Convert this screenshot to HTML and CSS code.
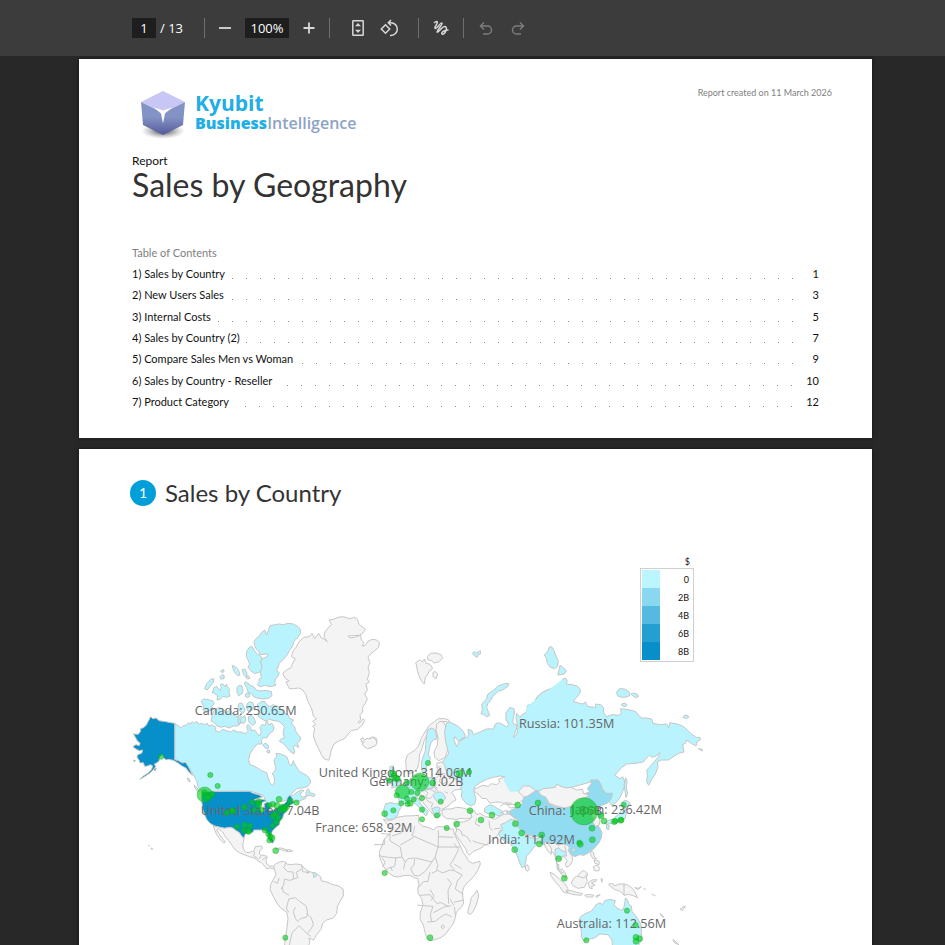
FILE: index.html
```html
<!DOCTYPE html>
<html lang="en">
<head>
    <meta charset="UTF-8">
    <meta name="viewport" content="width=device-width, initial-scale=1.0">
    <title>Sales by Geography</title>
    <link rel="stylesheet" href="styles.css">
</head>
<body>
    <header class="toolbar">
        <input class="field page-field" type="text" value="1" aria-label="Page">
        <span class="page-total">/ 13</span>
        <span class="sep"></span>
        <button class="tool" aria-label="Zoom out"><svg viewBox="0 0 20 20"><path class="thick" d="M4 10h12"/></svg></button>
        <input class="field zoom-field" type="text" value="100%" aria-label="Zoom">
        <button class="tool" aria-label="Zoom in"><svg viewBox="0 0 20 20"><path class="thick" d="M4.500 10h11M10 4.500v11"/></svg></button>
        <span class="sep"></span>
        <button class="tool fit" aria-label="Fit to page"><svg viewBox="0 0 20 20"><rect x="4.800" y="2.800" width="10.400" height="14.400" rx=".5"/><path class="solid" d="M10 5l3 3.200H7zM10 15l3-3.200H7z"/></svg></button>
        <button class="tool" aria-label="Rotate"><svg viewBox="0 0 20 20"><path d="M5.500 6.800L9.700 11l-4.200 4.200L1.300 11zM8.500 4.800H11a6.300 6.300 0 0 1 0 12.600h-1M11 2L8.300 4.800 11 7.600"/></svg></button>
        <span class="sep draw-sep"></span>
        <button class="tool" aria-label="Draw"><svg viewBox="0 0 20 20"><path d="M3 5C5 3 7 3 6.200 5C5.500 7 3 10 4.200 10.500C6 11 9.500 4 11 5C12.300 6 5 13 6.200 14.200C7.500 15.200 11 8 14 8.500C17.500 9.500 13.500 16.500 11.500 16.200C9 15.500 13 11.500 17.500 12"/></svg></button>
        <span class="sep undo-sep"></span>
        <button class="tool" aria-label="Undo" disabled><svg viewBox="0 0 20 20"><path d="M8 4.500L4.500 8 8 11.500M5 8h6.500a4 4 0 0 1 0 8H7"/></svg></button>
        <button class="tool" aria-label="Redo" disabled><svg viewBox="0 0 20 20"><path d="M12 4.500L15.500 8 12 11.500M15 8H8.500a4 4 0 0 0 0 8H13"/></svg></button>
    </header>

    <main class="viewer">
        <section class="page cover">
            <div class="cover-top">
                <div class="logo">
                    <svg class="cube" viewBox="0 0 50 54">
                        <defs>
                            <radialGradient id="shadow"><stop offset="0" stop-color="#333"/><stop offset="1" stop-color="#999" stop-opacity="0"/></radialGradient>
                            <linearGradient id="side" x2="0" y2="1"><stop offset=".45" stop-color="#8493c5"/><stop offset="1" stop-color="#55599b"/></linearGradient>
                        </defs>
                        <ellipse cx="25" cy="44" rx="22" ry="8" fill="url(#shadow)"/>
                        <path fill="#c7c6f5" d="M25 4l22 11-22 11L3 15z"/>
                        <path fill="url(#side)" d="M3 15l22 11v22L5 38zM47 15L25 26v22l20-10z"/>
                        <path fill="#fff" d="M16 20.500l9 3 9-3-7 6-2 10-2-10z"/>
                    </svg>
                    <div class="brand">
                        <div class="brand-name">Kyubit</div>
                        <div class="brand-line"><b>Business</b>Intelligence</div>
                    </div>
                </div>
                <div class="created">Report created on 11 March 2026</div>
            </div>
            <div class="kind">Report</div>
            <h1>Sales by Geography</h1>
            <h2>Table of Contents</h2>
            <ul class="toc">
                <li><span>1) Sales by Country</span><i></i><b>1</b></li>
                <li><span>2) New Users Sales</span><i></i><b>3</b></li>
                <li><span>3) Internal Costs</span><i></i><b>5</b></li>
                <li><span>4) Sales by Country (2)</span><i></i><b>7</b></li>
                <li><span>5) Compare Sales Men vs Woman</span><i></i><b>9</b></li>
                <li><span>6) Sales by Country - Reseller</span><i></i><b>10</b></li>
                <li><span>7) Product Category</span><i></i><b>12</b></li>
            </ul>
        </section>

        <section class="page report">
            <div class="section-title"><span class="number">1</span><h3>Sales by Country</h3></div>
            <div class="map-box">
                <svg class="map" viewBox="36 -180 2061 1400">
                    <!-- North America -->
                    <g>
                        <path class="low" d="M164 340L173 346 182 353 190 347 200 345 206 338 211 342 217 335 222 340 230 334 236 343 246 340 254 344 262 340 266 348 276 345 288 352 286 362 298 366 308 358 320 362 332 366 340 360 352 366 364 366 376 371 384 362 380 350 384 343 392 352 394 362 404 360 412 370 418 378 424 366 420 352 428 342 434 348 440 332 446 345 456 340 462 352 460 362 448 372 440 384 430 382 424 392 426 402 412 402 400 416 390 432 386 450 390 464 402 468 416 476 428 484 440 488 444 502 450 518 458 527 464 515 462 498 456 492 464 484 468 474 464 462 462 450 470 440 468 430 482 432 492 436 500 440 504 450 508 462 514 468 520 452 524 462 530 472 536 482 548 490 560 496 570 508 572 518 562 530 545 534 530 536 518 548 508 560 520 556 532 546 544 540 552 542 540 552 546 562 560 558 556 566 540 572 530 578 526 570 516 572 508 556 500 572 480 574 456 588 440 578 430 556 400 546 385 544 270 544 245 545 234 530 230 512 222 498 214 484 204 470 194 462 180 456 164 448z"/>
                        <path class="low" d="M557 549L564 536 570 542 566 548 578 550 586 554 582 560 570 556 560 558zM202 504l7 4 1 8-6-4zM222 526l10 8 6 12-10-7z"/>
                        <path class="low" d="M402 95L408 86 418 78 424 68 434 60 440 75 446 60 450 47 464 44 478 42 490 44 504 40 520 42 534 50 541 58 542 70 532 84 522 94 518 108 508 122 502 134 494 144 488 150 478 160 474 172 470 182 478 188 474 198 466 208 464 218 468 226 450 230 436 226 420 230 412 224 418 216 416 208 424 204 422 190 420 176 426 168 422 156 426 146 442 140 444 132 420 134 416 124 408 116 404 106z"/>
                        <path class="low" d="M380 124l8-12 8-3 8 14 6 8 12 7 4 10-6 6 6 14-4 17-18 6-12-9-8-10 5-10-6-14-4-8z"/>
                        <path class="low" d="M336 166l10 4 10 11 4 14-8 2-6-7-5-8zM367 179l8-2 6 13-1 12-7-5-5-11zM377 200l8-3 5 8-8 2zM302 183l9-5 1 7-8 2zM300 200l6-6 7 3-1 9-10 1zM254 236l6-15 12-13 10-2-2 10-10 14-9 10zM280 240l2-8 9-2 9 12 4-10-3-8 7-3 8 9 4-8 2 8 6 6-1 12 3 10-11 4-11-3-7 9-10 2 2-13-8-6-9-4zM351 233l6-7 9 2 3 13-3 10-10 6-5-10zM375 215l9 5 9 7 8 3 9 11 12 2 16-2 16 4 2 12-10 8-16 2-16-2-12-4-9-11-8-1-5-17-6-8zM377 252l8-4 5 10-8 5-6-4zM243 274l8-7 14 2 14 4 4 8-8 8 6 9-13 4-10 7-9-9 3-10zM276 318l4-13 11-10 8-2 11 6 10 8 10-8 6 9 8 10 8 0 8 8 2 14-8 8-15 0-10 6-15-5-12 3-12-5-7-9-10-6zM357 281l9-2 6 13 3 9-6 9-9-6-6-14zM380 283l8-8 11 4 3 14-8 9-8 3-6-10zM353 318l8-2 5 8 8-8 4 14-6 10-9-2-8 4zM385 320l9-4 8 7 5 16-10 8-10-10z"/>
                        <path class="low" d="M412 284L422 276 434 274 440 284 450 290 460 284 474 290 486 300 494 310 504 314 508 324 520 330 514 340 524 350 526 362 534 374 542 382 540 392 532 400 536 412 524 406 520 412 524 422 522 432 510 424 500 412 490 400 478 394 484 386 494 384 490 374 490 362 494 350 486 342 476 334 462 332 448 328 438 334 424 326 414 318 420 308 414 296zM428 405l8-6 10 8-2 10-8-3zM440 423l8-2 2 7-7 1z"/>
                        <path class="high" d="M92 320l6 6 11-2 8 8 20 3 15 3 12 2v109l11 3 12 7 9-2 8 11 6 12 7 16-10-9-9-13-12-6-12-9-14-8-15-3-7 2-8-8-3-8-8 8-2 12-8 5-6 3 4 8-8 10-9 9-18 12-12 7 10-10 14-9 10-9 4-12-7-4-9 4-8 1-4-11-10 1-3-9-6-8 2-8 12-4 3-10-10 2-14-7-5-6 9-5 10 3 2-8-8-6-5-10-7-11 15 1 7-10-1-7 10-3 8-8zM100 478l9-3-3 8zM40 450l7 2-5 3z"/>
                        <path class="high" d="M246 545L388 544 400 550 416 554 428 561 414 565 402 570 418 570 432 568 438 574 426 577 420 590 422 605 430 606 434 592 432 582 442 576 450 582 452 592 446 600 458 602 470 594 478 588 492 582 500 574 502 564 509 556 516 563 518 573 526 577 512 584 504 592 500 602 492 612 488 624 480 634 478 644 468 652 460 660 454 668 452 678 458 686 462 696 456 700 448 688 444 676 438 664 426 660 414 660 402 660 398 668 386 668 376 672 372 684 366 680 358 668 348 662 340 655 328 652 314 655 300 652 284 648 270 640 260 628 254 614 248 598 246 580 244 562z"/>
                        <path class="land" d="M280 648L300 652 314 655 328 652 340 655 348 662 358 668 366 680 372 684 370 696 368 708 372 720 380 728 392 726 402 722 406 710 424 708 428 714 420 722 418 732 424 736 434 736 442 740 438 752 440 762 448 768 460 768 466 774 458 776 450 774 440 776 432 766 424 758 414 752 402 744 388 740 372 734 358 728 344 718 336 706 326 692 316 680 308 666 296 656 290 660 296 670 306 684 316 696 312 700 300 688 290 674 284 660z"/>
                        <path class="land" d="M461 770L466 762 478 756 492 754 500 762 512 764 528 762 544 764 552 774 566 784 580 788 590 792 602 800 604 812 620 816 638 824 656 828 670 838 670 858 660 874 652 890 650 910 640 924 620 930 608 940 604 956 590 974 580 990 566 984 570 996 560 1020 552 1090 540 1160 510 1200 496 1100 494 1000 500 960 504 926 500 906 484 896 472 882 460 860 450 838 452 824 460 808 468 794z"/>
                        <path class="border" d="M499 755l-8 18 12 12 16 1 2 21-11 4-17-3-2 17-8 12M521 807l13-4-6-16 17-10M545 765l3 20 20 3M562 780l2 12M461 815l12 5 4-16M487 830l2 15 18 11M507 866l-8 28 7 13M506 867l20-4 12 10 21 16 4 20-3 12-18 5-9 9-7-10-6-20 6-14M560 910l14 14 6 20-8 14-9 12M508 1005l8-36 21-22 24 24 12 8M404 725l-3 13 12 7M424 736l-8 12M440 740l-14 10"/>
                        <path class="low" d="M579 788l9 1 2 8-8 7z"/>
                        <path class="land" d="M466 716l14-2 12 2 12 7-10 0-12-4zM496 720l14-1 8 4-14 3zM84 706l5 2M93 714l5 2-2 3z"/>
                        <path class="land" d="M488 190L500 180 512 174 520 156 526 146 514 140 520 122 528 112 538 94 552 82 568 80 576 70 584 86 596 70 604 84 614 88 622 96 612 80 614 66 624 54 634 44 628 30 640 28 654 22 670 20 688 26 704 22 712 28 718 44 736 58 730 68 718 76 684 78 690 84 704 82 722 76 724 90 732 98 726 108 736 106 744 94 756 88 770 90 778 98 776 112 764 122 750 134 744 142 750 158 744 172 748 188 742 208 748 216 738 222 742 240 734 252 742 266 736 280 728 292 728 306 720 314 722 330 714 336 718 340 730 326 734 332 726 346 712 358 694 362 684 372 674 386 654 394 642 402 634 420 630 440 626 451 612 446 604 434 596 416 586 396 580 376 584 356 578 348 588 344 578 334 590 326 580 318 576 300 570 286 562 270 558 254 548 240 536 234 520 236 508 236 498 216 508 212 496 206z"/>
                        <path class="land" d="M723 393l6-7 5 6 6-6 6 3 7-7 8-1 8 4 2 8-2 9-10 8-12 5-14-6 4-6-8-2z"/>
                    </g>

                    <!-- Europe and Africa -->
                    <g transform="translate(660 90)">
                        <path class="land" d="M227 68l12-8 8 6 6-9 5 13 12 3 8 12-10 8-6 12-6 7-3 20-8-8-8-17-5-16-2-13zM262 50l9-10 15-1 17 5 5 10-12 12-14 3-6-7-11-2zM279 98l6-4 8 8-5 14-9-6z"/>
                        <path class="low" d="M397 40l8-5 5 4 11-7 1 9-8 3-2 8-7-3zM613 45l11-12 4-12 7-1 7 12 8 21 5 8-2 18-9 7-13-4-9-12-3-15zM423 222l4-13-2-17 14-14 5-16 16-11 14-13 20-7 12-1-2 9-16 11-13 4-17 15-4 10-11 12-3 12 6 14 3 10-11 3-7-7z"/>
                        <path class="land" d="M201 346l11-8 10-5 13-14 10-27 10-16 13-20 15-11 13-9 17 0 12 3 6 9-8 9-3-12-14-1-7 10 10 27-10 10-15-18-15 2-9 12-8 16-6 23-7 16-2 25-5 19-5 3-8 9-12 3-8-12-2-26z"/>
                        <path class="land" d="M290 252L300 244 310 246 316 256 318 276 320 296 326 318 320 340 314 354 296 362 284 352 282 336 292 316 294 294 288 270z"/>
                        <path class="low" d="M262 270l13-6 12 8 4 25-11 2-8 12-5 22-2 12 6 9-3 17-9 8-2 20-8 8-4-20-1-16 4-18 8-20 1-20z"/>
                        <path class="low" d="M318 252L326 246 342 252 356 260 370 274 376 288 370 298 356 304 344 290 342 300 350 320 354 312 360 300 370 294 382 292 386 284 384 268 396 272 400 284 420 276 436 268 448 266 460 268 466 252 478 248 492 256 500 262 506 252 498 240 498 218 510 202 522 206 524 216 518 246 522 252 530 254 530 264 520 292 530 284 534 262 528 234 530 220 540 232 546 224 560 216 562 196 590 188 586 178 598 164 616 152 632 146 645 140 660 128 668 118V455H590L576 430 550 420 540 410 510 415 500 412 480 408 460 412 440 418 420 428 404 440 402 456 408 476 404 492 394 498 378 490 364 472 366 450 352 444 330 432 316 418 310 400 306 384 308 366 326 340 316 300 314 276z"/>
                        <path class="land" d="M61 298l8-5 4 8 8-6 8 2 8-5 9 5 5 10-4 10-12 5-12 4-12-7-5-6 6-6z"/>
                        <path class="low" d="M150 380l10-3 2 14 7 15 5 13 7 13-8 7-18 6 2-12-9-14 1-18zM141 415l9 2 3 14-12 2z"/>
                        <path class="land" d="M203 432L215 420 227 412 235 405 245 410 263 413 284 417 296 407 292 388 290 370 306 366 314 376 318 392 326 408 340 412 350 420 366 432 362 448 344 450 334 458 342 466 348 480 336 486 328 496 318 502 306 508 298 516 294 526 286 534 280 524 270 512 258 498 246 484 234 476 220 478 206 478 196 462z"/>
                        <path class="low" d="M164 450l15-10 14-13 18-8 12-8 16-6 14 5 20 3 14 2 0 18-9 13-20 4-17 6-10 14-13 5-4 11-14 3-10 2-12-4-3-17-8-10zM137 491l13-3 18 3 14 2 1 9-8 14-2 10-12 11-15 2-12-8-3-22zM222 476l12-2 7 16 10 11 14 13-7 14-8-8-7-13-11-10-10-9zM279 464l8-8 15 0 10 8 5 12-12 11-14-2-9-12zM275 506l16-5 10 4-5 8 7 12-10 10-9-10z"/>
                        <path class="border" d="M210 413l8 16-10 14 10 16M235 405l4 17-4 13M250 411l-3 20 14 15 22-4 10 9M262 415l10 18 20 10M303 408l-5 17 10 8 15-9M290 446l-7 9-11-6M253 450l11 9-8 11 12 6 9-6M240 466l17 8 7 10 14 6-4 12M302 380l-12 3M290 398l26 3M314 455l10 5"/>
                        <path class="land" d="M307 510l12-3 14 0 17-5 18 2 20 6 6 10 0 14-18 3-16-2-12 4-14-3-14 0-10-7-4-8z"/>
                        <path class="land" d="M400 449l13-6 15-7 16 3 10-8 16 3 9-7-3-9 15-6 12-3 18 3 12 16 18 0 14 10 18 9-9 13-14 13-18 12-12 9-30 0-18-7-16-1-16 4-10-14-15-1-7-10-12-8z"/>
                        <path class="low" d="M434 505l13-10 13 2 12 8 14 8 5 10-14 5-16-6-20-2-8-5zM498 514l14 3 16-4 7 7-8 9-22-1z"/>
                        <path class="land" d="M389 510L402 512 410 524 420 520 436 530 450 532 466 538 474 532 488 524 504 522 520 524 534 530 536 540 522 548 520 560 506 566 492 566 480 572 474 584 462 596 450 608 434 616 420 626 400 634 388 646 382 640 376 624 364 608 354 594 346 582 350 570 344 556 350 546 370 546 388 540 396 530z"/>
                        <path class="land" d="M130 538l12 3 14-1 15-8 24-4 28-1 14-1-2 20 12 12 20 5 13 7 11-10 19 0 13 5 17 3 3 14 9 18 10 20 8 18 10 14 5 10 12 8 22-6 2 8-8 20-12 18-15 14-13 15-6 16 2 18 2 16-8 14-14 13-4 20-5 14-9 13-13 18-14 11-22 8-14 2-8-9-5-16-5-22-10-17 1-20 8-24-4-18-10-15-2-14 4-13-4-18-10-3-14-7-18 1-17 4-12-2-16-10-15-19-7-15-4-10-2-18 8-20 5-16 9-13 9-5 4-16z"/>
                        <path class="land" d="M385 806l5-14 4-20 9-9 8-12 5 14-2 12-6 20-10 20-8 6-7-4z"/>
                        <path class="border" d="M123 580l27 3 0 20 31 18 5 30-20 3-21-2-29-5M102 614h31v-18M186 563l-2 16-28 9M224 558l-3 18-6 10M215 586l80 35v-50M181 615l40-23M294 620l-8 30-10 16-50-12-22 2-8 10M293 621h68M286 650l6 22M186 651l9 15-4 22M168 652l-4 26-13 6M224 656l-2 18-10 12 10 20 14 2 20-14M256 694l20-28M276 700l17-9 15 8 21-9 14 2M342 610l14 18-16 32-10 14 13 16M294 672l-4 20M343 672l22 14M344 693l23 12-15 18-6 24 24 16M235 743l15-18 14-1 6-28M322 715l12 16-10 20 2 40M270 748l12 20-9 14M238 766l32-2 20 26 14-2 22 12M232 795l16 2 31 2M279 799l-8 24 4 22M280 818l34-18 20-3M331 778l10 18M342 787l28-7M343 800l4 30M262 846l24-2 15-12 16-10 18 8M308 854l6 7-6 5-5-5zM295 590l45 2M367 587l-4-14-15-9M126 653l10 14-9 14M137 690l15-9 5 12M368 584l14 7 10 16M398 602l14 6 34 8M410 535l-4 16 14 8M447 542l2 20 8 10M462 567l20-3M488 557l14-6"/>
                    </g>

                    <!-- Northern Asia -->
                    <g transform="translate(1230 90)">
                        <path class="low" d="M98 118L106 114 112 122 108 132 126 134 142 138 151 148 150 160 140 172 130 184 148 190 158 192 166 186 174 200 198 202 196 192 212 194 220 202 222 220 230 230 238 226 250 224 264 226 274 222 272 206 290 208 316 214 334 234 350 234 366 238 368 250 390 254 410 252 416 264 420 248 442 252 458 258 470 268 482 280 498 292 510 292 511 300 502 304 498 318 484 310 470 300 466 310 458 314 462 336 446 340 430 350 416 360 394 360 382 366 384 382 376 402 364 420 356 436 350 426 352 404 350 390 362 378 374 364 384 352 390 338 378 348 366 352 358 346 346 358 340 366 318 370 290 372 276 382 254 406 270 416 278 410 284 424 282 444 276 460 268 476 256 490 244 496L204 420 60 460 20 456 0 440 10 188 18 186 22 170 36 158 52 150 64 146 78 140z"/>
                        <path class="cover-seam" d="M-10 200L98 118V455H-60L-80 420-20 300z"/>
                        <path class="low" d="M83 105l4-14 3-15 8 5 11 11-6 10-11 2zM260 156l8-10 16 1 8 4 7 8 1 7-10 5-16 1-12-5zM303 162l8-3 11 4 4 6-10 4-8-6zM274 193l10-4 7 5-4 6-10-2zM459 232l6-7 9 2 2 5-7 4zM505 326l12 2 0 5zM287 413l4 10-2 22 4 15-5 13-3-20-2-20z"/>
                        <path class="land" d="M-35 455L-20 438 0 438 14 450 25 455 10 470-10 480z"/>
                        <path class="mid" d="M-34 500L-24 492-19 472-7 468 8 458 22 450 40 464 50 474 54 490 74 500 98 503 120 500 140 480 168 470 160 462 180 456 172 446 184 430 182 420 204 420 214 436 216 450 230 460 248 460 244 476 232 490 220 494 206 500 200 510 210 516 222 520 218 528 206 536 200 550 210 566 216 578 214 594 206 610 192 626 176 638 162 646 148 644 134 650 122 642 110 634 96 632 84 638 72 630 64 616 46 616 28 610 10 606-8 594-22 582-32 568-38 552-36 540-50 530-62 522-60 512z"/>
                        <path class="land" d="M25 455L40 446 60 444 76 442 80 432 90 438 108 444 122 442 140 450 158 448 160 460 178 466 168 472 156 476 142 482 126 498 104 504 80 498 58 490 48 472 34 466z"/>
                        <path class="land" d="M180 519l14-4 10 10 6 17-3 14-10 3-9-13 2-10z"/>
                        <path class="low" d="M276 492l8-12 10 4 8 9-13 9-10 2zM285 505l4 14-4 18-14 4-18 7-22 5-8-3 14-10 14-3 8-9 10-6 5-14zM230 553l8 3-2 13-7-3z"/>
                    </g>

                    <!-- South Asia and Oceania -->
                    <g transform="translate(1140 480)">
                        <path class="low" d="M2 164L16 158 32 148 46 152 44 164 54 170 66 184 82 194 100 202 116 202 130 196 126 208 118 220 110 214 108 226 98 236 90 248 80 258 78 272 74 290 66 293 58 276 52 258 46 244 38 232 32 222 18 216 4 206-4 192 8 178z"/>
                        <path class="land" d="M76 288l6-4 6 12-5 8-6-4zM75 192l22 6 20 2-2 6-20-2-20-8z"/>
                        <path class="land" d="M133 218L143 216 153 221 165 220 175 226 186 222 198 224 208 230 206 244 216 258 218 272 210 286 200 292 196 284 202 272 194 262 180 252 170 256 168 270 172 284 176 294 186 304 188 316 180 308 172 294 170 274 164 256 158 246 150 250 142 240 136 230z"/>
                        <path class="low" d="M165 238l12-5 6 8 14 4 3 13-12 0-6 11-8-3-8-10zM172 282l5 2-2 14 4 6-8-8zM216 236l10-2-2 9-7 3z"/>
                        <path class="land" d="M150 306l16 9 14 14 14 11 10 16-2 14-12-4-12-17-14-16-10-14zM178 301l9-4 9 12 4 14-10-3zM198 362l16 0 16 5 18 4-4 5-22-2-18-5zM218 330l7-9 9-4 8-10 10-6 11 11-4 12 3 10-9 18-20 3-12-7-7-8zM265 338l11-8 14-1-2 5-14 4 11 8-10 2 2 8-8-2-3-10zM254 376l12-3 16 3-4 5-18 0zM288 378l13-4-11 9zM303 325l5 3-3 9zM272 243l8 3 2 12 8 9-11-1-7-12zM282 270l7 2 9 2-1 10-12-4zM280 290l12-5 7 10-3 8-13-1zM326 343l12-3 5 8 14-6 16 0 12 4 13 10 6 9 9 18-14-6-14-4-13 3-11-12-18-6-12-9zM404 353l12 2 8-6-9 10zM430 355l8 4M455 372l12 6M480 430l12 11-6-1zM540 418l9-7 7-2-9 13zM519 508l18 16-13-5z"/>
                        <path class="border" d="M372 342v34M182 304l10 6M234 319l18 5 10-12M143 216l12 21-2 17M199 246l-5-18"/>
                        <path class="low" d="M238 446L244 438 258 430 272 424 284 412 288 404 300 398 308 404 314 392 330 388 346 392 342 404 348 412 362 420 370 418 374 402 376 384 382 388 386 402 394 408 396 424 406 436 414 448 422 462 424 484 424 506 414 532 400 567H340L336 510 324 494 300 492 284 504 266 508 252 514 244 500 244 480 238 464z"/>
                        <path class="border" d="M0 130l20-10 16 15 10 15M0 110l15-12 20 2M20 100l10 14 20-2"/>
                    </g>

                    <!-- Place labels -->
                    <g class="labels">
                        <text x="224" y="315">Canada: 250.65M</text>
                        <text x="242" y="615">United States: 7.04B</text>
                        <text x="596" y="501">United Kingdom: 314.06M</text>
                        <text x="748" y="527">Germany: 1.02B</text>
                        <text x="586" y="665">France: 658.92M</text>
                        <text x="1197" y="354">Russia: 101.35M</text>
                        <text x="1226" y="616">China: 1.86B</text>
                        <text x="1354" y="612">Japan: 236.42M</text>
                        <text x="1104" y="702">India: 111.92M</text>
                        <text x="1310" y="955">Australia: 112.56M</text>
                    </g>

                    <!-- Sales points -->
                    <g class="points">
                        <circle cx="123" cy="440" r="8"/><circle cx="271" cy="495" r="8"/><circle cx="293" cy="528" r="8"/>
                        <circle cx="254" cy="554" r="23"/><circle cx="264" cy="561" r="9"/><circle cx="276" cy="553" r="9"/><circle cx="253" cy="547" r="8"/>
                        <circle cx="397" cy="577" r="9"/><circle cx="417" cy="575" r="9"/><circle cx="416" cy="584" r="10"/><circle cx="373" cy="591" r="9"/><circle cx="403" cy="600" r="8"/><circle cx="424" cy="600" r="8"/>
                        <circle cx="338" cy="602" r="9"/><circle cx="337" cy="602" r="8"/><circle cx="320" cy="609" r="8"/><circle cx="351" cy="650" r="8"/><circle cx="374" cy="645" r="9"/><circle cx="390" cy="648" r="8"/><circle cx="371" cy="661" r="8"/><circle cx="385" cy="663" r="9"/><circle cx="386" cy="665" r="8"/>
                        <circle cx="435" cy="660" r="9"/><circle cx="446" cy="672" r="9"/><circle cx="455" cy="684" r="10"/><circle cx="448" cy="691" r="8"/><circle cx="451" cy="680" r="8"/><circle cx="467" cy="722" r="9"/>
                        <circle cx="457" cy="647" r="8"/><circle cx="469" cy="636" r="9"/><circle cx="475" cy="624" r="9"/><circle cx="459" cy="619" r="9"/><circle cx="467" cy="611" r="9"/><circle cx="483" cy="600" r="10"/><circle cx="488" cy="592" r="10"/><circle cx="500" cy="590" r="9"/><circle cx="494" cy="598" r="9"/><circle cx="511" cy="574" r="9"/><circle cx="530" cy="578" r="8"/><circle cx="477" cy="568" r="9"/><circle cx="458" cy="583" r="9"/><circle cx="471" cy="587" r="9"/><circle cx="448" cy="586" r="8"/>
                        <circle cx="496" cy="983" r="8"/>
                    </g>
                    <g class="points" transform="translate(660 90)">
                        <circle cx="264" cy="369" r="8"/><circle cx="240" cy="426" r="27"/><circle cx="188" cy="455" r="21"/><circle cx="278" cy="429" r="9"/><circle cx="359" cy="400" r="11"/><circle cx="387" cy="396" r="8"/>
                        <circle cx="158" cy="400" r="9"/><circle cx="162" cy="407" r="9"/><circle cx="168" cy="415" r="10"/><circle cx="173" cy="417" r="8"/><circle cx="148" cy="421" r="8"/><circle cx="201" cy="427" r="8"/><circle cx="170" cy="466" r="8"/><circle cx="184" cy="490" r="8"/><circle cx="201" cy="476" r="8"/><circle cx="214" cy="456" r="8"/><circle cx="232" cy="459" r="8"/><circle cx="221" cy="478" r="8"/><circle cx="203" cy="492" r="8"/><circle cx="211" cy="490" r="9"/><circle cx="246" cy="474" r="8"/><circle cx="246" cy="509" r="8"/><circle cx="160" cy="511" r="8"/><circle cx="134" cy="521" r="9"/><circle cx="302" cy="485" r="8"/><circle cx="291" cy="526" r="8"/><circle cx="246" cy="538" r="8"/>
                        <circle cx="390" cy="512" r="9"/><circle cx="423" cy="540" r="9"/><circle cx="350" cy="552" r="9"/><circle cx="320" cy="564" r="8"/><circle cx="456" cy="525" r="9"/><circle cx="533" cy="495" r="9"/><circle cx="594" cy="489" r="9"/><circle cx="526" cy="551" r="9"/><circle cx="545" cy="579" r="9"/><circle cx="524" cy="629" r="9"/><circle cx="605" cy="585" r="9"/><circle cx="598" cy="612" r="9"/><circle cx="134" cy="699" r="8"/><circle cx="270" cy="893" r="9"/>
                    </g>
                    <g class="points" transform="translate(1140 480)">
                        <circle cx="252" cy="124" r="41"/><circle cx="303" cy="137" r="9"/><circle cx="312" cy="153" r="9"/><circle cx="371" cy="104" r="8"/><circle cx="343" cy="155" r="9"/><circle cx="346" cy="153" r="8"/><circle cx="362" cy="151" r="9"/><circle cx="364" cy="150" r="8"/><circle cx="276" cy="175" r="9"/><circle cx="277" cy="209" r="9"/><circle cx="238" cy="218" r="8"/><circle cx="241" cy="223" r="9"/><circle cx="176" cy="266" r="9"/><circle cx="193" cy="325" r="9"/>
                        <circle cx="381" cy="422" r="8"/><circle cx="407" cy="465" r="8"/><circle cx="259" cy="511" r="8"/><circle cx="408" cy="502" r="9"/><circle cx="419" cy="506" r="9"/><circle cx="408" cy="514" r="9"/>
                    </g>
                </svg>
                <div class="legend">
                    <div class="unit">$</div>
                    <ul>
                        <li class="v0">0</li>
                        <li class="v2">2B</li>
                        <li class="v4">4B</li>
                        <li class="v6">6B</li>
                        <li class="v8">8B</li>
                    </ul>
                </div>
            </div>
        </section>
    </main>
</body>
</html>
```
FILE: styles.css
```css
* { box-sizing: border-box; }
body {
    margin: 0;
    height: 100vh;
    overflow: hidden;
    display: flex;
    flex-direction: column;
    background: #282828;
    color: #111;
    font-family: Lato, Carlito, sans-serif;
}
h1, h2, h3, ul { margin: 0; padding: 0; font-weight: normal; }
ul { list-style: none; }

.toolbar {
    flex: none;
    display: flex;
    align-items: center;
    height: 56px;
    padding-left: 132px;
    background: #3c3c3c;
    color: #fff;
    font: 13px "Open Sans", sans-serif;
}
.field {
    height: 20px;
    padding: 0;
    border: 0;
    background: #1e1e1e;
    color: #fff;
    font: inherit;
    text-align: center;
}
.page-field { width: 24px; }
.zoom-field { width: 44px; margin: 0 4px; }
.page-total { width: 48px; padding-left: 4px; }
.sep { width: 1px; height: 20px; margin: 0 4px 0 0; background: #6e6e6e; }
.tool {
    width: 32px;
    height: 32px;
    padding: 6px;
    border: 0;
    background: none;
    color: #d8d8d8;
}
.tool svg {
    display: block;
    width: 20px;
    height: 20px;
    fill: none;
    stroke: currentColor;
    stroke-width: 1.5;
}
.tool .thick { stroke-width: 1.8; }
.tool .solid { fill: currentColor; stroke: none; }
.tool:disabled { color: #7c7c7c; }
.tool + .sep { margin-left: 4px; }
.fit { margin-left: 8px; }
.tool + .draw-sep { margin: 0 6px 0 12px; }
.tool + .undo-sep { margin: 0 6px; }

.viewer { flex: 1; padding: 3px 73px 0 79px; overflow: hidden; }
.page {
    padding: 0 53px;
    margin-bottom: 11px;
    background: #fff;
    box-shadow: 0 0 4px rgba(0,0,0,0.5);
}
.cover { padding-top: 28px; padding-bottom: 26px; }
.cover-top { display: flex; justify-content: space-between; }
.logo { display: flex; padding-left: 6px; }
.cube { width: 50px; height: 54px; }
.brand {
    padding: 4px 0 0 7px;
    font-family: "Open Sans", sans-serif;
    color: #8ba3c4;
}
.brand-name { font-size: 21px; line-height: 24px; font-weight: bold; color: #21aee4; }
.brand-line { font-size: 16px; line-height: 16px; font-weight: 600; }
.brand-line b { color: #21aee4; }
.created { margin-right: -13px; font-size: 9px; line-height: 11px; color: #808080; }
.kind { margin-top: 12px; font-size: 12px; line-height: 16px; }
h1 { font-size: 32px; line-height: 32px; color: #333; }
h2 { margin: 44px 0 2px; font-size: 11px; line-height: 16px; color: #808080; }
.toc li { display: flex; height: 21px; font-size: 11px; line-height: 21px; }
.toc li:nth-child(3n+2) { margin-bottom: 1px; }
.toc i {
    flex: 1;
    height: 16px;
    margin: 0 14px 0 6px;
    background: repeating-linear-gradient(to left, #888 0 1px, transparent 1px 14px) bottom / 100% 1px no-repeat;
}
.toc b { min-width: 12px; font-weight: normal; text-align: right; }

.report { padding-top: 28px; }
.section-title { display: flex; align-items: center; gap: 9px; height: 32px; margin-left: -2px; }
.number {
    width: 26px;
    height: 26px;
    border-radius: 50%;
    background: #009fda;
    color: #fff;
    font-size: 14px;
    line-height: 26px;
    text-align: center;
}
h3 { font-size: 24px; line-height: 32px; color: #333; }
.map-box { position: relative; margin-top: 41px; }
.map { display: block; width: 100%; }
.map path { stroke: #c6c6c6; stroke-width: 3; stroke-linejoin: round; }
.map .land { fill: #f4f4f4; }
.map .low { fill: #b8f3fe; }
.map .mid { fill: #92dcf1; }
.map .high { fill: #078fc9; }
.map .border { fill: none; }
/* hides the edge where the two halves of Russia meet */
.map .cover-seam { fill: #b8f3fe; stroke: none; }
.labels { font: 38px "Open Sans", sans-serif; fill: #666; }
.points circle { fill: #00cc18; fill-opacity: 0.6; stroke: #159a20; stroke-opacity: 0.5; stroke-width: 2; }

.legend {
    position: absolute;
    top: 6px;
    right: 125px;
    width: 54px;
    font-size: 9px;
    line-height: 12px;
}
.legend .unit { padding-right: 4px; text-align: right; }
.legend ul { padding: 1px; border: 1px solid #d0d0d0; }
.legend li {
    height: 18px;
    padding-right: 3px;
    border-left: 18px solid;
    line-height: 20px;
    text-align: right;
}
.legend .v0 { border-color: #bbf5ff; }
.legend .v2 { border-color: #8ad8ef; }
.legend .v4 { border-color: #55badf; }
.legend .v6 { border-color: #249fd1; }
.legend .v8 { border-color: #078fc9; }
```
